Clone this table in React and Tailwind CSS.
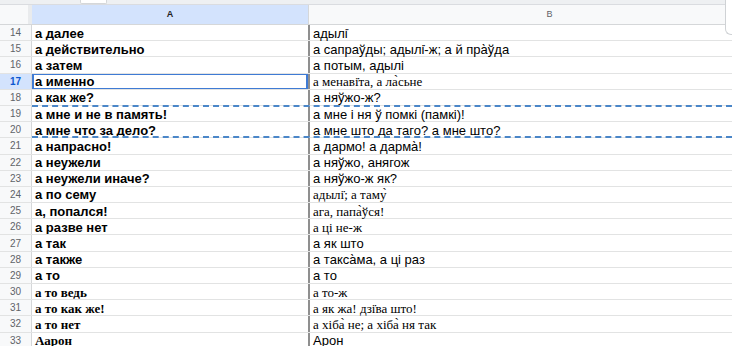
import React from "react";

const rows = [
  { n: 14, a: "а далее", b: "адылі̇" },
  { n: 15, a: "а действительно", b: "а сапраўды; адылі̇-ж; а й пра̀ўда" },
  { n: 16, a: "а затем", b: "а потым, адылі" },
  { n: 17, a: "а именно", b: "а менаві̇та, а ла̀сьне", bSerif: true },
  { n: 18, a: "а как же?", b: "а няўжо-ж?" },
  { n: 19, a: "а мне и не в память!", b: "а мне і ня ў помкі (памкі)!" },
  { n: 20, a: "а мне что за дело?", b: "а мне што да таго? а мне што?" },
  { n: 21, a: "а напрасно!", b: "а дармо! а дарма̀!" },
  { n: 22, a: "а неужели", b: "а няўжо, анягож" },
  { n: 23, a: "а неужели иначе?", b: "а няўжо-ж як?" },
  { n: 24, a: "а по сему", b: "адылі̇; а таму̀", bSerif: true },
  { n: 25, a: "а, попался!", b: "ага, папа̀ўся!", bSerif: true },
  { n: 26, a: "а разве нет", b: "а ці не-ж", bSerif: true },
  { n: 27, a: "а так", b: "а як што" },
  { n: 28, a: "а также", b: "а такса̀ма, а ці раз" },
  { n: 29, a: "а то", b: "а то" },
  { n: 30, a: "а то ведь", b: "а то-ж", aSerif: true, bSerif: true },
  { n: 31, a: "а то как же!", b: "а як жа! дзі̇ва што!", aSerif: true, bSerif: true },
  { n: 32, a: "а то нет", b: "а хіба̀ не; а хіба̀ ня так", aSerif: true, bSerif: true },
  { n: 33, a: "Аарон", b: "Арон", aSerif: true },
];

const sans = "font-['Liberation_Sans',Arial,sans-serif]";
const serif = "font-['Liberation_Serif','Times_New_Roman',serif]";

const Row = ({ r }) => {
  const active = r.n === 17;
  return (
    <div className="flex h-[16.2px] border-b border-[#e2e3e3]">
      <div
        className={
          "w-[32px] shrink-0 border-r border-[#d5d7d9] flex items-center justify-center text-[10px] " +
          sans +
          (active ? " bg-[#d3e3fd] text-[#0b57d0] font-bold" : " bg-[#f8f9fa] text-[#5f6368]")
        }
      >
        {r.n}
      </div>
      <div
        className={
          "relative w-[276px] shrink-0 pl-[3px] pt-[1px] flex items-center text-[13px] font-bold text-black leading-none whitespace-nowrap overflow-hidden " +
          (r.aSerif ? serif : sans)
        }
      >
        {r.a}
        {active && (
          <div className="absolute left-0 right-0 top-[-1px] bottom-[-1px] border-2 border-[#3f7bd4]" />
        )}
      </div>
      <div
        className={
          "flex-1 border-l-2 border-[#8f8f8f] pl-[3px] pt-[1px] flex items-center text-[13px] text-black leading-none whitespace-nowrap " +
          (r.bSerif ? serif : sans)
        }
      >
        {r.b}
      </div>
    </div>
  );
};

export default function App() {
  return (
    <div className="relative w-[732px] h-[346px] overflow-hidden bg-white">
      <div className="h-[5px] bg-[#eef0f2] border-b border-[#dadce0] relative">
        <div className="absolute left-[80px] top-0 w-[27px] h-[4px] bg-white border-x border-b border-[#d5d7d9] rounded-b-[2px]" />
      </div>
      <div className={"flex h-[20px] border-b border-[#d5d7d9] text-[9px] " + sans}>
        <div className="w-[32px] shrink-0 bg-[#f8f9fa] border-r-[4px] border-[#e9ebed]" />
        <div className="w-[276px] shrink-0 bg-[#d3e3fd] flex items-center justify-center font-bold text-[#1f1f1f]">
          A
        </div>
        <div className="flex-1 bg-[#f8f9fa] border-l border-[#d5d7d9] flex items-center justify-center text-[#5f6368] pl-[58px]">
          B
        </div>
      </div>
      <div className="relative">
        {rows.map((r) => (
          <Row key={r.n} r={r} />
        ))}
        <div className="absolute left-[32px] right-0 top-[80px] h-[33px] border-y-2 border-dashed border-[#4a86c8]" />
      </div>
      <div className="absolute right-0 top-0 w-[7px] h-[35px] bg-white border-l border-b border-[#cfd2d5] rounded-bl-[6px]" />
    </div>
  );
}
